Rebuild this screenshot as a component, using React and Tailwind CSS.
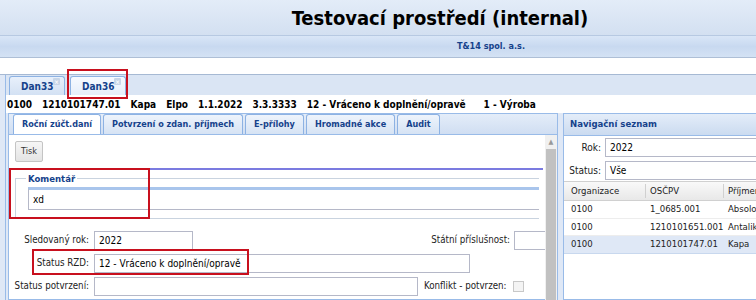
import { useState } from 'react'

const font = "font-['DejaVu_Sans_Condensed','DejaVu_Sans',sans-serif]"

function TopTab({ label, active }) {
  return (
    <div
      className={
        'relative flex h-[19px] w-[56px] items-center rounded-t-[3px] border border-b-0 border-[#8db2e3] pl-[11px] text-[10px] font-bold text-[#15428b] ' +
        (active ? 'bg-gradient-to-b from-[#f7faff] to-[#e6eefa]' : 'bg-gradient-to-b from-[#e8f0fb] to-[#d3e1f3]')
      }
    >
      {label}
      <span className="absolute right-[4px] top-[1px] flex h-[7px] w-[7px] items-center justify-center rounded-[1px] bg-[#c8d6e8] text-[6px] leading-none text-white">
        ×
      </span>
    </div>
  )
}

function PanelTab({ label, active }) {
  return (
    <div
      className={
        'flex h-[20px] items-center rounded-t-[3px] border border-b-0 border-[#8db2e3] px-[8px] text-[9px] font-bold text-[#15428b] ' +
        (active ? 'bg-white' : 'bg-gradient-to-b from-[#eef4fc] to-[#d6e3f4]')
      }
    >
      {label}
    </div>
  )
}

function Row({ label, children }) {
  return (
    <div className="flex items-center">
      <div className="w-[85px] pr-[5px] text-right text-[9.7px] text-[#222]">{label}</div>
      {children}
    </div>
  )
}

function Input({ className = '', value = '' }) {
  return (
    <div className={'flex h-[19px] items-center border border-[#b5b8c8] bg-white pl-[4px] text-[10px] text-black ' + className}>
      {value}
    </div>
  )
}

const rows = [
  ['0100', '1_0685.001', 'Absolon'],
  ['0100', '1210101651.001', 'Antalik'],
  ['0100', '1210101747.01', 'Kapa'],
]

export default function App() {
  const [selected] = useState(2)

  return (
    <div className={'relative h-[300px] w-[756px] overflow-hidden bg-[#dfe8f6] ' + font}>
      {/* header */}
      <div className="flex h-[36px] items-center justify-center border-b border-[#b7c9e2] bg-gradient-to-b from-[#e3ecf8] to-[#d3e0f1] pl-[124px] text-[20px] font-bold text-black">
        Testovací prostředí (internal)
      </div>
      <div className="flex h-[22px] items-center border-b border-[#aebfd6] bg-gradient-to-b from-[#d9e6f7] via-[#c8d9f0] to-[#d4e2f4] pl-[457px] text-[9px] font-bold text-[#15428b]">
        T&amp;14 spol. a.s.
      </div>
      <div className="h-[17px] border-b border-[#a6b9d3] bg-white" />

      {/* doc tabs */}
      <div className="ml-[5px] flex h-[20px] items-end gap-[5px] border-l border-[#99bbe8] bg-[#dae5f4] pl-[3px]">
        <TopTab label="Dan33" />
        <TopTab label="Dan36" active />
      </div>

      {/* info */}
      <div className="ml-[5px] flex h-[18px] items-center gap-[10px] border-l border-[#99bbe8] bg-white pl-[1px] text-[10px] font-bold text-black">
        <span>0100</span>
        <span>1210101747.01</span>
        <span>Kapa</span>
        <span>Elpo</span>
        <span>1.1.2022</span>
        <span>3.3.3333</span>
        <span>12 - Vráceno k doplnění/opravě</span>
        <span className="ml-[8px]">1 - Výroba</span>
      </div>

      <div className="ml-[5px] flex h-[187px] border-l border-[#99bbe8] pl-[2px]">
        {/* left panel */}
        <div className="flex w-[550px] shrink-0 flex-col border border-[#99bbe8] bg-white">
          <div className="flex h-[22px] items-end gap-[2px] border-b border-[#99bbe8] bg-gradient-to-b from-[#e4edf9] to-[#d0def2] pl-[4px]">
            <PanelTab label="Roční zúčt.daní" active />
            <PanelTab label="Potvrzení o zdan. příjmech" />
            <PanelTab label="E-přílohy" />
            <PanelTab label="Hromadné akce" />
            <PanelTab label="Audit" />
          </div>
          <div className="flex flex-1">
            <div className="min-w-0 flex-1">
              <div className="pl-[6px] pt-[6px]">
                <div className="flex h-[21px] w-[28px] items-center justify-center rounded-[2px] border border-[#c4c4c4] bg-gradient-to-b from-[#f6f6f6] to-[#e4e4e4] text-[9px] text-[#333]">
                  Tisk
                </div>
              </div>
              <div className="mx-[2px] mt-[6px] h-[2px] bg-[#7b7be0]" />
              <div className="relative mx-[6px] mt-[8px] h-[41px] border border-r-0 border-[#c9d3df] pl-[12px] pt-[8px]">
                <span className="absolute left-[10px] top-[-7px] bg-white px-[2px] text-[9.5px] font-bold text-[#15428b]">
                  Komentář
                </span>
                <div className="flex h-[23px] items-center border border-r-0 border-[#b5b8c8] border-t-[3px] border-t-[#a9c5ec] bg-white pl-[4px] text-[10px]">
                  xd
                </div>
              </div>
              <div className="mt-[12px] flex flex-col gap-[4px]">
                <div className="flex items-center justify-between">
                  <Row label="Sledovaný rok:">
                    <Input className="w-[99px]" value="2022" />
                  </Row>
                  <div className="flex items-center">
                    <span className="pr-[4px] text-[9.7px] text-[#222]">Státní příslušnost:</span>
                    <Input className="w-[31px] border-r-0" />
                  </div>
                </div>
                <Row label="Status RZD:">
                  <Input className="w-[376px]" value="12 - Vráceno k doplnění/opravě" />
                </Row>
                <div className="flex items-center">
                  <Row label="Status potvrzení:">
                    <Input className="w-[324px]" />
                  </Row>
                  <span className="pl-[6px] text-[9.7px] text-[#222]">Konflikt - potvrzen:</span>
                  <div className="ml-[6px] h-[11px] w-[11px] border border-[#c8c8c8] bg-[#f4f4f4]" />
                </div>
                <Row label="">
                  <Input className="w-[99px]" />
                </Row>
              </div>
            </div>
            {/* scrollbar */}
            <div className="flex w-[12px] flex-col bg-[#f0f0f0]">
              <div className="flex h-[14px] items-center justify-center text-[7px] text-[#999]">▲</div>
              <div className="mx-[1px] flex-1 bg-[#c1c1c1]" />
            </div>
          </div>
        </div>

        {/* right panel */}
        <div className="ml-[5px] flex min-w-0 flex-1 flex-col border border-r-0 border-[#99bbe8] bg-white">
          <div className="flex h-[22px] items-center border-b border-[#99bbe8] bg-gradient-to-b from-[#e4edf9] to-[#cbdbf0] pl-[6px] text-[9.5px] font-bold text-[#15428b]">
            Navigační seznam
          </div>
          <div className="flex flex-col gap-[4px] pt-[2px]">
            <div className="flex items-center">
              <span className="w-[41px] shrink-0 pr-[4px] text-right text-[10px] text-[#222]">Rok:</span>
              <Input className="flex-1 border-r-0" value="2022" />
            </div>
            <div className="flex items-center">
              <span className="w-[41px] shrink-0 pr-[4px] text-right text-[10px] text-[#222]">Status:</span>
              <Input className="flex-1 border-r-0" value="Vše" />
            </div>
          </div>
          <div className="mt-[1px] flex h-[20px] items-center border-y border-[#d0d0d0] bg-gradient-to-b from-[#f9f9f9] to-[#e8e8e8] text-[9.5px] text-[#222]">
            <div className="w-[82px] shrink-0 border-r border-[#d0d0d0] pl-[7px]">Organizace</div>
            <div className="w-[78px] shrink-0 border-r border-[#d0d0d0] pl-[4px]">OSČPV</div>
            <div className="flex-1 overflow-hidden whitespace-nowrap pl-[4px]">Příjmení</div>
          </div>
          {rows.map((r, i) => (
            <div
              key={i}
              className={
                'flex h-[17.5px] items-center border-b text-[9.5px] text-[#222] ' +
                (i === selected ? 'border-[#c8d8ee] bg-[#dfe8f6]' : 'border-[#ededed]')
              }
            >
              <div className="w-[82px] shrink-0 pl-[7px]">{r[0]}</div>
              <div className="w-[78px] shrink-0 pl-[4px]">{r[1]}</div>
              <div className="flex-1 overflow-hidden whitespace-nowrap pl-[4px]">{r[2]}</div>
            </div>
          ))}
        </div>
      </div>

      {/* annotation boxes */}
      <div className="pointer-events-none absolute left-[67px] top-[69px] h-[30px] w-[61px] border-2 border-[#c8101e]" />
      <div className="pointer-events-none absolute left-[9px] top-[168px] h-[51px] w-[141px] border-2 border-[#c8101e]" />
      <div className="pointer-events-none absolute left-[32px] top-[249px] h-[26px] w-[217px] border-2 border-[#c8101e]" />
    </div>
  )
}
